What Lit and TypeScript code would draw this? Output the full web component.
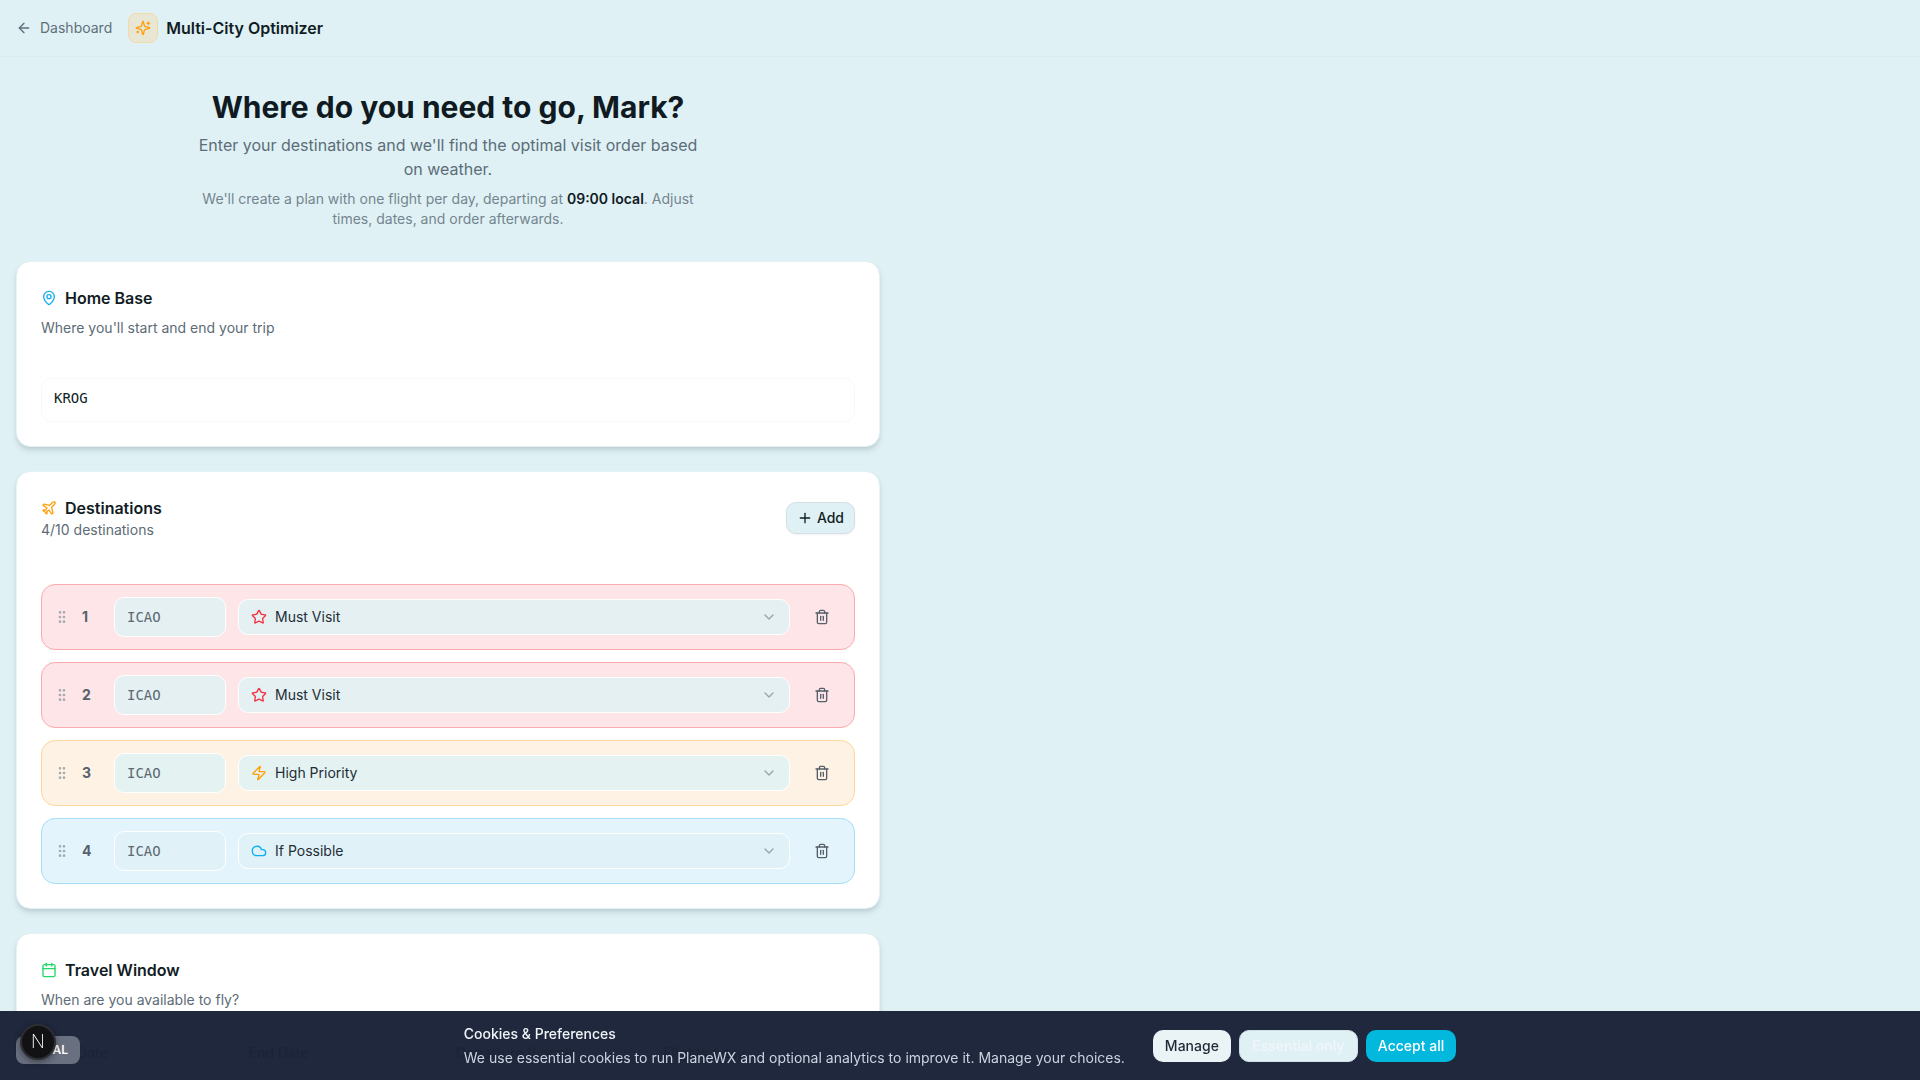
import {html, css, svg, LitElement} from 'lit';
import {customElement} from 'lit/decorators.js';

const icons = {
  arrowLeft: svg`<path d="m12 19-7-7 7-7"/><path d="M19 12H5"/>`,
  sparkles: svg`<path d="M9.937 15.5A2 2 0 0 0 8.5 14.063l-6.135-1.582a.5.5 0 0 1 0-.962L8.5 9.936A2 2 0 0 0 9.937 8.5l1.582-6.135a.5.5 0 0 1 .963 0L14.063 8.5A2 2 0 0 0 15.5 9.937l6.135 1.581a.5.5 0 0 1 0 .964L15.5 14.063a2 2 0 0 0-1.437 1.437l-1.582 6.135a.5.5 0 0 1-.963 0z"/><path d="M20 3v4"/><path d="M22 5h-4"/><path d="M4 17v2"/><path d="M5 18H3"/>`,
  pin: svg`<path d="M20 10c0 4.993-5.539 10.193-7.399 11.799a1 1 0 0 1-1.202 0C9.539 20.193 4 14.993 4 10a8 8 0 0 1 16 0"/><circle cx="12" cy="10" r="3"/>`,
  plane: svg`<path d="M17.8 19.2 16 11l3.5-3.5C21 6 21.5 4 21 3c-1-.5-3 0-4.5 1.5L13 8 4.8 6.2c-.5-.1-.9.1-1.1.5l-.3.5c-.2.5-.1 1 .3 1.3L9 12l-2 3H4l-1 1 3 2 2 3 1-1v-3l3-2 3.5 5.3c.3.4.8.5 1.3.3l.5-.2c.4-.3.6-.7.5-1.2z"/>`,
  plus: svg`<path d="M5 12h14"/><path d="M12 5v14"/>`,
  grip: svg`<circle cx="9" cy="12" r="1"/><circle cx="9" cy="5" r="1"/><circle cx="9" cy="19" r="1"/><circle cx="15" cy="12" r="1"/><circle cx="15" cy="5" r="1"/><circle cx="15" cy="19" r="1"/>`,
  star: svg`<path d="M11.525 2.295a.53.53 0 0 1 .95 0l2.31 4.679a2.123 2.123 0 0 0 1.595 1.16l5.166.756a.53.53 0 0 1 .294.904l-3.736 3.638a2.123 2.123 0 0 0-.611 1.878l.882 5.14a.53.53 0 0 1-.771.56l-4.618-2.428a2.122 2.122 0 0 0-1.973 0L6.396 21.01a.53.53 0 0 1-.77-.56l.881-5.139a2.122 2.122 0 0 0-.611-1.879L2.16 9.795a.53.53 0 0 1 .294-.906l5.165-.755a2.122 2.122 0 0 0 1.597-1.16z"/>`,
  zap: svg`<path d="M4 14a1 1 0 0 1-.78-1.63l9.9-10.2a.5.5 0 0 1 .86.46l-1.92 6.02A1 1 0 0 0 13 10h7a1 1 0 0 1 .78 1.63l-9.9 10.2a.5.5 0 0 1-.86-.46l1.92-6.02A1 1 0 0 0 11 14z"/>`,
  cloud: svg`<path d="M17.5 19H9a7 7 0 1 1 6.71-9h1.79a4.5 4.5 0 1 1 0 9Z"/>`,
  chevron: svg`<path d="m6 9 6 6 6-6"/>`,
  trash: svg`<path d="M3 6h18"/><path d="M19 6v14c0 1-1 2-2 2H7c-1 0-2-1-2-2V6"/><path d="M8 6V4c0-1 1-2 2-2h4c1 0 2 1 2 2v2"/><line x1="10" x2="10" y1="11" y2="17"/><line x1="14" x2="14" y1="11" y2="17"/>`,
  calendar: svg`<path d="M8 2v4"/><path d="M16 2v4"/><rect width="18" height="18" x="3" y="4" rx="2"/><path d="M3 10h18"/>`,
};

const icon = (name: keyof typeof icons, cls = '') => html`
  <svg class="icon ${cls}" viewBox="0 0 24 24" fill="none" stroke="currentColor" stroke-width="2" stroke-linecap="round" stroke-linejoin="round">${icons[name]}</svg>`;

const destinations = [
  {n: 1, kind: 'must', label: 'Must Visit', ico: 'star'},
  {n: 2, kind: 'must', label: 'Must Visit', ico: 'star'},
  {n: 3, kind: 'high', label: 'High Priority', ico: 'zap'},
  {n: 4, kind: 'low', label: 'If Possible', ico: 'cloud'},
] as const;

@customElement('app-root')
export class AppRoot extends LitElement {

  static styles = css`
    :host {
      display: block;
      height: 100vh;
      overflow: hidden;
      background: #dff1f5;
      color: #111c24;
      font-family: Inter, "Noto Sans", sans-serif;
      font-size: 14px;
      line-height: 20px;
    }

    * { box-sizing: border-box; }

    .icon { width: 16px; height: 16px; flex: none; display: block; }

    .topbar {
      height: 57px;
      padding: 0 16px;
      display: flex;
      align-items: center;
      border-bottom: 1px solid #d9ebf0;
    }
    .back { display: flex; align-items: center; gap: 8px; color: #5f6f7a; }
    .logo {
      width: 30px;
      height: 30px;
      margin-left: 16px;
      border-radius: 8px;
      background: #e8e6d5;
      border: 1px solid #f3d9a8;
      color: #ff9f0a;
      display: flex;
      align-items: center;
      justify-content: center;
    }
    .app-title { margin-left: 8px; font-size: 16px; line-height: 24px; font-weight: 600; }

    main { width: 896px; padding: 32px 16px 0; }

    .hero { text-align: center; margin-bottom: 32px; }
    h1 { margin: 0 0 8px; font-size: 30px; line-height: 36px; font-weight: 700; color: #0f1a22; }
    .lead { margin: 0 auto 8px; width: 512px; font-size: 16px; line-height: 24px; color: #5c6d78; }
    .note { margin: 0 auto; width: 512px; color: #75858f; }
    .note b { font-weight: 600; color: #0f1a22; }

    .card {
      background: #fff;
      background-clip: padding-box;
      border: 1px solid #e6f3f6;
      border-radius: 14px;
      padding: 24px;
      margin-bottom: 24px;
      box-shadow: 0 4px 6px -1px rgba(30, 60, 75, .16), 0 2px 4px -2px rgba(30, 60, 75, .12);
    }
    .card-title { display: flex; align-items: center; gap: 8px; font-size: 16px; line-height: 24px; font-weight: 600; }
    .card-sub { color: #5c6b76; }
    .gap-8 { margin-top: 8px; }

    .c-pin { color: #12aef5; }
    .c-plane { color: #ff9f0a; }
    .c-cal { color: #1fd968; }

    .home-input {
      margin-top: 40px;
      height: 44px;
      padding: 0 12px 4px;
      display: flex;
      align-items: center;
      border: 1px solid #f6f9fa;
      border-radius: 10px;
      font-family: "DejaVu Sans Mono", monospace;
      font-size: 14px;
    }

    .dest-head { display: flex; align-items: center; justify-content: space-between; margin-bottom: 44px; }
    .add {
      height: 32px;
      padding: 0 10px;
      display: flex;
      align-items: center;
      gap: 4px;
      font-weight: 500;
      color: #111c24;
      background: #dff1f5;
      border: 1px solid #d2e0e5;
      border-radius: 10px;
      box-shadow: 0 1px 2px rgba(0, 0, 0, .05);
    }

    .rows { display: flex; flex-direction: column; gap: 12px; }
    .row {
      height: 66px;
      padding: 0 12px;
      display: flex;
      align-items: center;
      gap: 12px;
      border: 1px solid;
      border-radius: 14px;
    }
    .row.must { background: #fee5e8; border-color: #fdaab0; }
    .row.high { background: #fdf2e3; border-color: #fdd79c; }
    .row.low { background: #e3f4fc; border-color: #a6def8; }
    .grip { color: #a3abb2; }
    .num { width: 20px; font-weight: 700; color: #56616b; }
    .icao {
      width: 112px;
      height: 40px;
      padding: 0 12px;
      display: flex;
      align-items: center;
      background: #e4f0f2;
      border: 1px solid #fff;
      border-radius: 10px;
      font-family: "DejaVu Sans Mono", monospace;
      color: #5c6872;
    }
    .select {
      flex: 1;
      height: 36px;
      padding: 0 12px;
      display: flex;
      align-items: center;
      gap: 8px;
      background: #e4f0f2;
      border: 1px solid #fff;
      border-radius: 10px;
      color: #232d36;
    }
    .row.high .icao, .row.high .select { background: #e4f2f2; }
    .row.low .icao, .row.low .select { background: #e1f1f8; }
    .select span { flex: 1; }
    .select .chev { color: #9aa5ac; }
    .must .lvl { color: #f4303f; }
    .high .lvl { color: #ff9f0a; }
    .low .lvl { color: #0ab0f5; }
    .del { width: 40px; display: flex; justify-content: center; color: #55606a; }

    .fields { margin-top: 33px; display: grid; grid-template-columns: repeat(4, 1fr); gap: 16px; font-weight: 500; }

    .consent {
      position: fixed;
      left: 0;
      right: 0;
      bottom: 0;
      height: 69px;
      display: flex;
      justify-content: center;
      align-items: center;
      gap: 28px;
      background: rgba(27, 36, 56, .98);
    }
    .consent-text { display: flex; flex-direction: column; gap: 4px; margin-top: 1px; }
    .consent-title { color: #f1f5f9; font-weight: 500; }
    .consent-body { color: #cbd5e1; }
    .consent-actions { display: flex; gap: 8px; }
    .btn {
      height: 32px;
      padding: 0 12px;
      display: flex;
      align-items: center;
      justify-content: center;
      border-radius: 10px;
      font-weight: 500;
    }
    .btn.manage { background: #eaf4f7; color: #1f2933; }
    .btn.essential { width: 119px; background: #dff1f5; color: #f0f6fa; border: 1px solid #d2e0e5; }
    .btn.accept { background: #02b8dc; color: #fff; }

    .env {
      position: fixed;
      left: 16px;
      bottom: 16px;
      width: 64px;
      height: 28px;
      padding-right: 12px;
      display: flex;
      align-items: center;
      justify-content: flex-end;
      border-radius: 8px;
      background: #697080;
      color: #fff;
      font-size: 12px;
      font-weight: 600;
    }
    .next {
      position: fixed;
      left: 20px;
      top: 1024px;
      width: 36px;
      height: 36px;
      display: flex;
      align-items: center;
      justify-content: center;
      border-radius: 50%;
      background: #121214;
      border: 2px solid #2d2e33;
      box-shadow: 0 2px 6px rgba(0, 0, 0, .4);
      color: #fff;
      font-size: 18px;
      font-weight: 200;
    }
  `;

  render() {
    return html`
      <header class="topbar">
        <div class="back">${icon('arrowLeft')}<span>Dashboard</span></div>
        <div class="logo">${icon('sparkles')}</div>
        <div class="app-title">Multi-City Optimizer</div>
      </header>
      <main>
        <div class="hero">
          <h1>Where do you need to go, Mark?</h1>
          <p class="lead">Enter your destinations and we'll find the optimal visit order based on weather.</p>
          <p class="note">We'll create a plan with one flight per day, departing at <b>09:00 local</b>. Adjust times, dates, and order afterwards.</p>
        </div>

        <section class="card">
          <div class="card-title">${icon('pin', 'c-pin')}Home Base</div>
          <div class="card-sub gap-8">Where you'll start and end your trip</div>
          <div class="home-input">KROG</div>
        </section>

        <section class="card">
          <div class="dest-head">
            <div>
              <div class="card-title">${icon('plane', 'c-plane')}Destinations</div>
              <div class="card-sub">4/10 destinations</div>
            </div>
            <div class="add">${icon('plus')}Add</div>
          </div>
          <div class="rows">
            ${destinations.map(d => html`
              <div class="row ${d.kind}">
                ${icon('grip', 'grip')}
                <div class="num">${d.n}</div>
                <div class="icao">ICAO</div>
                <div class="select">
                  ${icon(d.ico, 'lvl')}
                  <span>${d.label}</span>
                  ${icon('chevron', 'chev')}
                </div>
                <div class="del">${icon('trash')}</div>
              </div>
            `)}
          </div>
        </section>

        <section class="card">
          <div class="card-title">${icon('calendar', 'c-cal')}Travel Window</div>
          <div class="card-sub gap-8">When are you available to fly?</div>
          <div class="fields">
            <div>Start Date</div>
            <div>End Date</div>
            <div>Departure (Local)</div>
            <div>Flights / day</div>
          </div>
        </section>
      </main>

      <div class="consent">
        <div class="consent-text">
          <div class="consent-title">Cookies &amp; Preferences</div>
          <div class="consent-body">We use essential cookies to run PlaneWX and optional analytics to improve it. Manage your choices.</div>
        </div>
        <div class="consent-actions">
          <div class="btn manage">Manage</div>
          <div class="btn essential">Essential only</div>
          <div class="btn accept">Accept all</div>
        </div>
      </div>

      <div class="env">LOCAL</div>
      <div class="next">N</div>
    `;
  }

}
